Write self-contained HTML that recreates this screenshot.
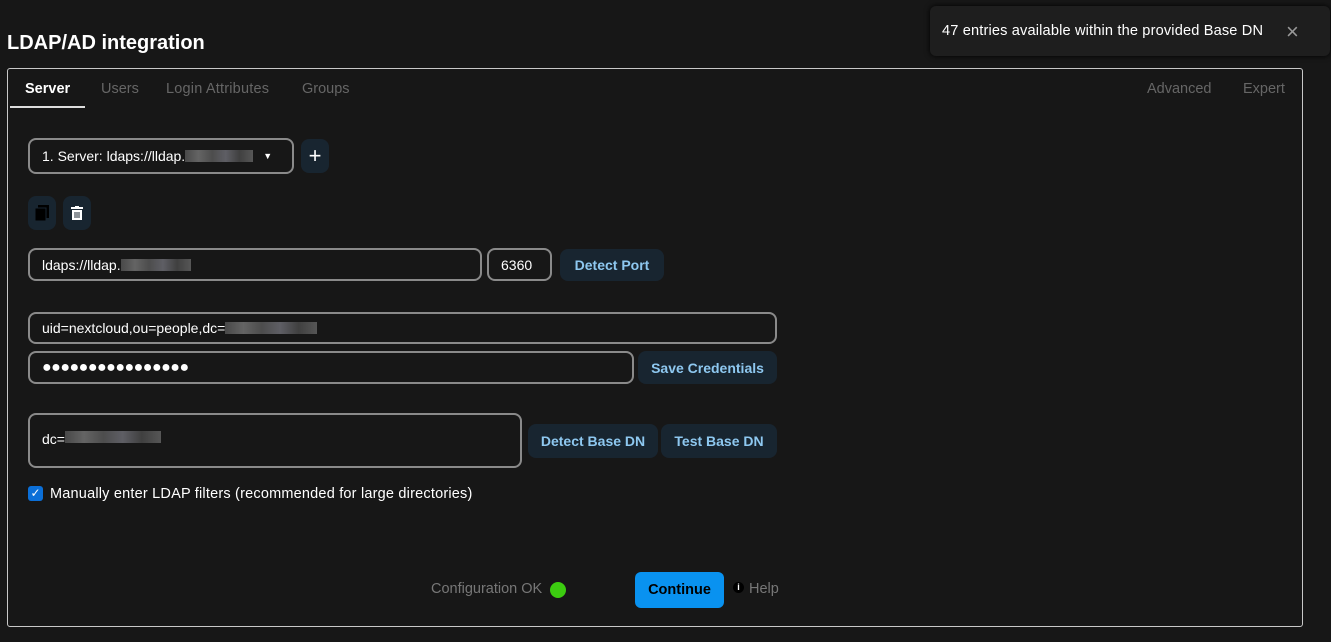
<!DOCTYPE html><html><head><style>
body{margin:0;width:1331px;height:642px;background:#171717;font-family:"Liberation Sans",sans-serif;color:#fff;position:relative;overflow:hidden}
.a{position:absolute}
.in{position:absolute;border:2px solid #8a8a8a;border-radius:8px;box-sizing:border-box;font-size:14px;color:#fff;padding-left:12px;display:flex;align-items:center}
.btn{position:absolute;background:#182530;border-radius:8px;color:#8ec8f0;font-weight:bold;font-size:14px;display:flex;align-items:center;justify-content:center}
.blur{display:inline-block;height:12px;background:linear-gradient(90deg,#555,#777,#5a5a5a,#707078,#4a4a4a,#666);opacity:.8}
.tab{position:absolute;top:81px;font-size:14.5px;color:#666}
</style></head><body>
<div class="a" style="left:7px;top:32px;font-size:20px;font-weight:bold">LDAP/AD integration</div>
<div class="a" style="left:7px;top:68px;width:1296px;height:559px;border:1px solid #c8c8c8;border-radius:3px;box-sizing:border-box"></div>
<div class="tab" style="left:25px;color:#fff;font-weight:bold">Server</div>
<div class="a" style="left:10px;top:106px;width:75px;height:2px;background:#ddd"></div>
<div class="tab" style="left:101px">Users</div>
<div class="tab" style="left:166px;letter-spacing:.2px">Login Attributes</div>
<div class="tab" style="left:302px">Groups</div>
<div class="tab" style="left:1147px">Advanced</div>
<div class="tab" style="left:1243px">Expert</div>
<div class="a" style="left:930px;top:6px;width:400px;height:50px;background:#1e1e1e;border-radius:6px;box-shadow:0 0 6px #000"></div>
<div class="a" style="left:942px;top:23px;font-size:14.6px;letter-spacing:.15px">47 entries available within the provided Base DN</div>
<div class="a" style="left:1286px;top:19px;font-size:22px;color:#999">×</div>
<div class="in" style="left:28px;top:138px;width:266px;height:36px">1. Server: ldaps://lldap.<span class="blur" style="width:68px"></span><span style="margin-left:10px;font-size:9px">▼</span></div>
<div class="btn" style="left:301px;top:139px;width:28px;height:34px;color:#fff;font-size:22px;font-weight:normal">+</div>
<div class="btn" style="left:28px;top:196px;width:28px;height:34px"><svg width="14" height="16"><rect x="3" y="0" width="11" height="13" fill="#000"/><rect x="0" y="3" width="11" height="13" fill="#000" stroke="#182530"/></svg></div>
<div class="btn" style="left:63px;top:196px;width:28px;height:34px"><svg width="12" height="14"><rect x="0" y="1" width="12" height="2" fill="#fff"/><rect x="4" y="0" width="4" height="2" fill="#fff"/><path d="M1 4h10v10H1z" fill="#fff"/><path d="M4 6v6M6 6v6M8 6v6" stroke="#182530"/></svg></div>
<div class="in" style="left:28px;top:248px;width:454px;height:33px">ldaps://lldap.<span class="blur" style="width:70px"></span></div>
<div class="in" style="left:487px;top:248px;width:65px;height:33px">6360</div>
<div class="btn" style="left:560px;top:249px;width:104px;height:32px">Detect Port</div>
<div class="in" style="left:28px;top:312px;width:749px;height:32px">uid=nextcloud,ou=people,dc=<span class="blur" style="width:92px"></span></div>
<div class="in" style="left:28px;top:351px;width:606px;height:33px;font-size:16px;letter-spacing:-.5px">●●●●●●●●●●●●●●●●</div>
<div class="btn" style="left:638px;top:351px;width:139px;height:33px">Save Credentials</div>
<div class="in" style="left:28px;top:413px;width:494px;height:55px;align-items:flex-start;padding-top:16px">dc=<span class="blur" style="width:96px"></span></div>
<div class="btn" style="left:528px;top:424px;width:130px;height:34px">Detect Base DN</div>
<div class="btn" style="left:661px;top:424px;width:116px;height:34px">Test Base DN</div>
<div class="a" style="left:28px;top:486px;width:15px;height:15px;background:#0b6fd8;border-radius:3px;color:#fff;font-size:12px;text-align:center;line-height:15px">✓</div>
<div class="a" style="left:50px;top:486px;font-size:14.5px;letter-spacing:.2px">Manually enter LDAP filters (recommended for large directories)</div>
<div class="a" style="left:431px;top:581px;font-size:14.5px;color:#777">Configuration OK</div>
<div class="a" style="left:550px;top:582px;width:16px;height:16px;border-radius:50%;background:#3ccc10"></div>
<div class="a" style="left:635px;top:572px;width:89px;height:36px;background:#0992f0;border-radius:6px;color:#000;font-weight:bold;font-size:14.5px;display:flex;align-items:center;justify-content:center">Continue</div>
<div class="a" style="left:733px;top:582px;width:11px;height:11px;border-radius:50%;background:#000;color:#fff;font-size:9px;text-align:center;line-height:11px;font-weight:bold">i</div>
<div class="a" style="left:749px;top:581px;font-size:14.5px;color:#777">Help</div>
</body></html>
